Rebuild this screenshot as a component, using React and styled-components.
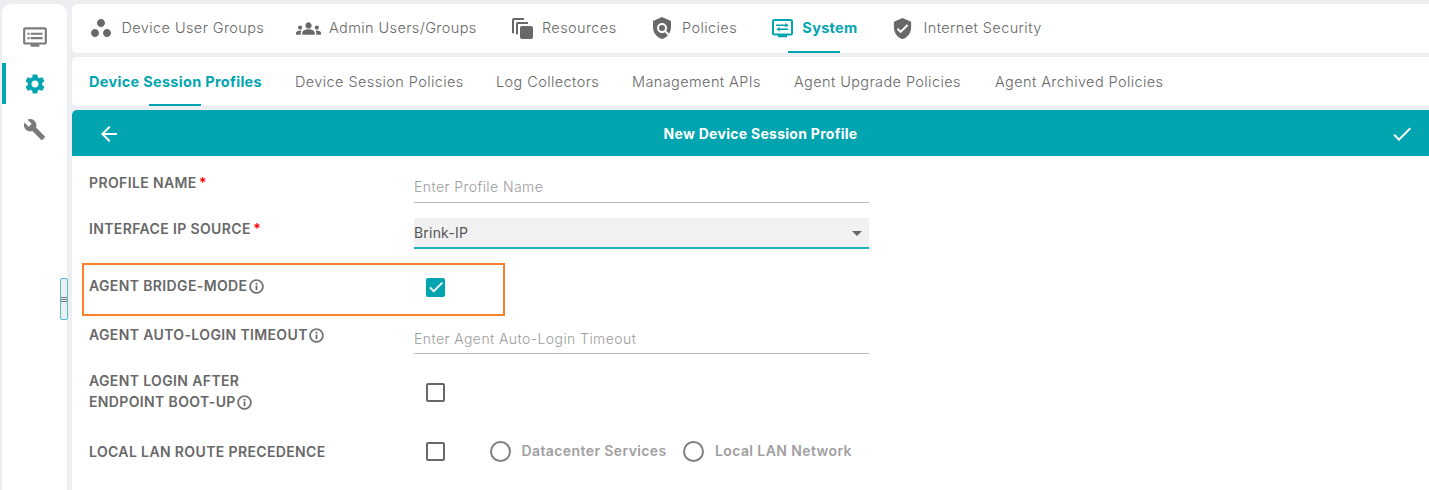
import React from "react";
import styled, { createGlobalStyle } from "styled-components";
import {
  MdWorkspaces,
  MdGroups,
  MdPolicy,
  MdVerifiedUser,
  MdOutlineDvr,
  MdSettings,
  MdBuild,
  MdArrowBack,
  MdCheck,
  MdInfoOutline,
  MdArrowDropDown,
} from "react-icons/md";

const teal = "#02a5af";
const grey = "#686868";

const GlobalStyle = createGlobalStyle`
  * { box-sizing: border-box; }
  body {
    margin: 0;
    height: 490px;
    overflow: hidden;
    background: #edeef2;
    font-family: Inter, "Liberation Sans", sans-serif;
    font-size: 14px;
    color: ${grey};
  }
  svg { display: block; flex: none; }
`;

const Shell = styled.div`
  display: flex;
  gap: 5px;
  height: 490px;
  padding: 4px 0 0 2px;
`;

const Sidebar = styled.nav`
  position: relative;
  width: 65px;
  padding-top: 13px;
  background: #fff;
  border-radius: 9px 9px 0 0;
`;

const SideItem = styled.div`
  display: flex;
  align-items: center;
  justify-content: center;
  height: 41px;
  margin-bottom: 5px;
  padding: 0 ${(p) => (p.$active ? 4 : 0)}px ${(p) => p.$lift || 0}px 0;
  border-left: ${(p) => (p.$active ? `4px solid ${teal}` : "0")};
  color: ${(p) => (p.$active ? teal : "#7b7b7b")};
`;

const ResizeHandle = styled.div`
  position: absolute;
  left: 58px;
  top: 274px;
  display: flex;
  flex-direction: column;
  align-items: stretch;
  justify-content: center;
  gap: 1px;
  width: 8px;
  height: 42px;
  border: 1px solid #4bbfc6;
  border-radius: 2px;
  background: #edeef2;
`;

const Grip = styled.span`
  height: 1px;
  background: #777;
`;

const Main = styled.main`
  flex: 1;
  display: flex;
  flex-direction: column;
  gap: 4px;
`;

const TabBar = styled.div`
  display: flex;
  height: 49px;
  padding-left: ${(p) => p.$inset}px;
  background: #fff;
  border-radius: 5px 0 0 5px;
`;

const Tab = styled.div`
  display: flex;
  flex-direction: column;
  align-items: center;
  margin-right: ${(p) => p.$gap}px;
  color: ${(p) => (p.$active ? teal : grey)};
`;

const TabBody = styled.div`
  flex: 1;
  display: flex;
  align-items: center;
  padding-top: 2px;
`;

const TabText = styled.span`
  margin-left: ${(p) => p.$offset || 0}px;
  width: ${(p) => p.$w}px;
  margin-top: ${(p) => (p.$offset ? -2 : 0)}px;
  font-size: 14.5px;
  font-weight: ${(p) => (p.$active ? 700 : 300)};
  letter-spacing: ${(p) => (p.$active ? 0.3 : 0.4)}px;
  white-space: nowrap;
`;

const Underline = styled.span`
  width: 52px;
  height: 2px;
  margin-right: 2px;
  background: ${(p) => (p.$active ? teal : "transparent")};
`;

const Panel = styled.section`
  flex: 1;
  display: flex;
  flex-direction: column;
  background: #fff;
  border-radius: 5px 0 0 0;
`;

const PanelHeader = styled.header`
  display: flex;
  align-items: center;
  justify-content: space-between;
  height: 46px;
  padding: 2px 15px 0 25px;
  background: ${teal};
  border-radius: 5px 0 0 0;
  color: #fff;
`;

const Title = styled.h1`
  margin: -2px 0 0;
  padding-left: 10px;
  font-size: 14px;
  font-weight: 700;
  letter-spacing: 0.28px;
`;

const Form = styled.form`
  display: flex;
  flex-direction: column;
`;

const Row = styled.div`
  display: grid;
  grid-template-columns: 325px 455px;
  height: ${(p) => p.$h}px;
  padding-left: 17px;
`;

const HighlightRow = styled(Row)`
  width: 423px;
  height: 53px;
  margin: 14px 0 0 10px;
  padding-left: 5px;
  border: 2px solid #fb8029;
  grid-template-columns: 325px 1fr;
`;

const Label = styled.label`
  padding-top: ${(p) => p.$top}px;
  height: fit-content;
  line-height: 21px;
  font-size: 14px;
  font-weight: 600;
  letter-spacing: 0.37px;
  white-space: pre;
`;

const InfoIcon = styled(MdInfoOutline)`
  display: inline-block;
  margin-left: 0.4px;
  vertical-align: -4.4px;
  path:not([fill="none"]) {
    stroke: currentColor;
    stroke-width: 0.4;
  }
`;

const Required = styled.span`
  margin-left: 2.5px;
  color: #f00;
`;

const TextField = styled.input`
  width: 455px;
  height: 30px;
  margin-top: ${(p) => p.$top}px;
  padding: 0 0 ${(p) => p.$lift || 0}px;
  border: 0;
  border-bottom: 1px solid #b9b9b9;
  background: transparent;
  font: 300 14px Inter, sans-serif;
  letter-spacing: 0.42px;
  outline: 0;
  &::placeholder { color: #9c9c9c; opacity: 1; }
`;

const Select = styled.div`
  display: flex;
  align-items: center;
  justify-content: space-between;
  height: 31px;
  margin-top: 8px;
  border-bottom: 2px solid #1eb0b9;
  background: #f1f1f1;
  color: #555;
  font-size: 14px;
  letter-spacing: 0.2px;
`;

const SelectArrow = styled(MdArrowDropDown)`
  margin-top: 1px;
  color: ${grey};
`;

const Controls = styled.div`
  display: flex;
  align-items: center;
  height: 22px;
  margin-top: ${(p) => p.$top}px;
  padding-left: 12px;
`;

const Checkbox = styled.span`
  display: flex;
  align-items: center;
  justify-content: center;
  width: 19px;
  height: 19px;
  border: 2px solid ${(p) => (p.$checked ? teal : grey)};
  border-radius: 2px;
  background: ${(p) => (p.$checked ? teal : "#fff")};
`;

const CheckMark = styled(MdCheck)`
  color: #fff;
  path:not([fill="none"]) {
    stroke: #fff;
    stroke-width: 0.7;
  }
`;

const Radio = styled.span`
  width: 21px;
  height: 21px;
  margin-left: ${(p) => p.$gap}px;
  border: 2px solid #808080;
  border-radius: 50%;
`;

const RadioText = styled.span`
  width: ${(p) => p.$w}px;
  margin: -1px 0 0 11px;
  color: #a0a0a0;
  font-weight: 600;
  letter-spacing: 0.4px;
  white-space: nowrap;
`;

const StackIcon = () => (
  <svg width="21" height="21" viewBox="0 0 21 21" fill="none" stroke="currentColor" strokeWidth="2">
    <path d="M1 15.3V2a1 1 0 0 1 1-1h10" />
    <path d="M5 16.3V6a1 1 0 0 1 1-1h10" />
    <rect x="8" y="8" width="13" height="13" rx="2" fill="currentColor" stroke="none" />
  </svg>
);

const SystemIcon = () => (
  <svg width="21" height="19" viewBox="0 0 21 19" fill="none" stroke="currentColor">
    <rect x="1" y="1" width="19" height="14.5" rx="1.2" strokeWidth="2" />
    <path d="M6 17h9" strokeWidth="2.5" />
    <path d="M4 6.3h10M7 10.3h9.3" strokeWidth="1.4" />
    <path d="M13.3 4l3.4 2.3-3.4 2.3zM7.7 8l-3.4 2.3 3.4 2.3z" fill="currentColor" stroke="none" />
  </svg>
);

const IconSlot = styled.span`
  margin-top: ${(p) => -p.$lift}px;
`;

const topTabs = [
  { text: "Device User Groups", icon: <MdWorkspaces size={24} />, lift: 1, off: 9, w: 142, gap: 32.4 },
  { text: "Admin Users/Groups", icon: <MdGroups size={25} />, lift: 1, off: 8.1, w: 147, gap: 36.2 },
  { text: "Resources", icon: <StackIcon />, lift: 0, off: 8.8, w: 74, gap: 34 },
  { text: "Policies", icon: <MdPolicy size={24} />, lift: 1, off: 8.1, w: 55, gap: 35 },
  { text: "System", icon: <SystemIcon />, lift: 0, off: 9.3, w: 56, gap: 33 },
  { text: "Internet Security", icon: <MdVerifiedUser size={23} />, lift: 1, off: 9.2, w: 120, gap: 0 },
];

const subTabs = [
  { text: "Device Session Profiles", w: 173 },
  { text: "Device Session Policies", w: 168 },
  { text: "Log Collectors", w: 103 },
  { text: "Management APIs", w: 129 },
  { text: "Agent Upgrade Policies", w: 168 },
  { text: "Agent Archived Policies", w: 169 },
];

export default function App() {
  return (
    <>
      <GlobalStyle />
      <Shell>
        <Sidebar>
          <SideItem $lift={1}><MdOutlineDvr size={26} /></SideItem>
          <SideItem $active><MdSettings size={24} /></SideItem>
          <SideItem><MdBuild size={23} /></SideItem>
          <ResizeHandle><Grip /><Grip /><Grip /></ResizeHandle>
        </Sidebar>
        <Main>
          <TabBar $inset={16.5}>
            {topTabs.map((t) => {
              const active = t.text === "System";
              return (
                <Tab key={t.text} $gap={t.gap} $active={active}>
                  <TabBody>
                    <IconSlot $lift={t.lift}>{t.icon}</IconSlot>
                    <TabText $offset={t.off} $w={t.w} $active={active}>{t.text}</TabText>
                  </TabBody>
                  <Underline $active={active} />
                </Tab>
              );
            })}
          </TabBar>
          <TabBar $inset={17}>
            {subTabs.map((t, i) => (
              <Tab key={t.text} $gap={33} $active={i === 0}>
                <TabBody><TabText $w={t.w} $active={i === 0}>{t.text}</TabText></TabBody>
                <Underline $active={i === 0} />
              </Tab>
            ))}
          </TabBar>
          <Panel>
            <PanelHeader>
              <MdArrowBack size={24} />
              <Title>New Device Session Profile</Title>
              <MdCheck size={24} />
            </PanelHeader>
            <Form>
              <Row $h={54}>
                <Label $top={16}>PROFILE NAME<Required>*</Required></Label>
                <TextField $top={17} $lift={2} placeholder="Enter Profile Name" />
              </Row>
              <Row $h={39}>
                <Label $top={8}>INTERFACE IP SOURCE<Required>*</Required></Label>
                <Select>Brink-IP<SelectArrow size={24} /></Select>
              </Row>
              <HighlightRow>
                <Label $top={10}>AGENT BRIDGE-MODE<InfoIcon size={17} /></Label>
                <Controls $top={11}><Checkbox $checked><CheckMark size={18} /></Checkbox></Controls>
              </HighlightRow>
              <Row $h={54}>
                <Label $top={8}>AGENT AUTO-LOGIN TIMEOUT<InfoIcon size={17} /></Label>
                <TextField $top={8} placeholder="Enter Agent Auto-Login Timeout" />
              </Row>
              <Row $h={60}>
                <Label $top={0}>{"AGENT LOGIN AFTER\nENDPOINT BOOT-UP"}<InfoIcon size={17} /></Label>
                <Controls $top={11}><Checkbox /></Controls>
              </Row>
              <Row $h={50}>
                <Label $top={11}>LOCAL LAN ROUTE PRECEDENCE</Label>
                <Controls $top={10}>
                  <Checkbox />
                  <Radio $gap={44.5} />
                  <RadioText $w={145}>Datacenter Services</RadioText>
                  <Radio $gap={16.5} />
                  <RadioText $w={140}>Local LAN Network</RadioText>
                </Controls>
              </Row>
            </Form>
          </Panel>
        </Main>
      </Shell>
    </>
  );
}
